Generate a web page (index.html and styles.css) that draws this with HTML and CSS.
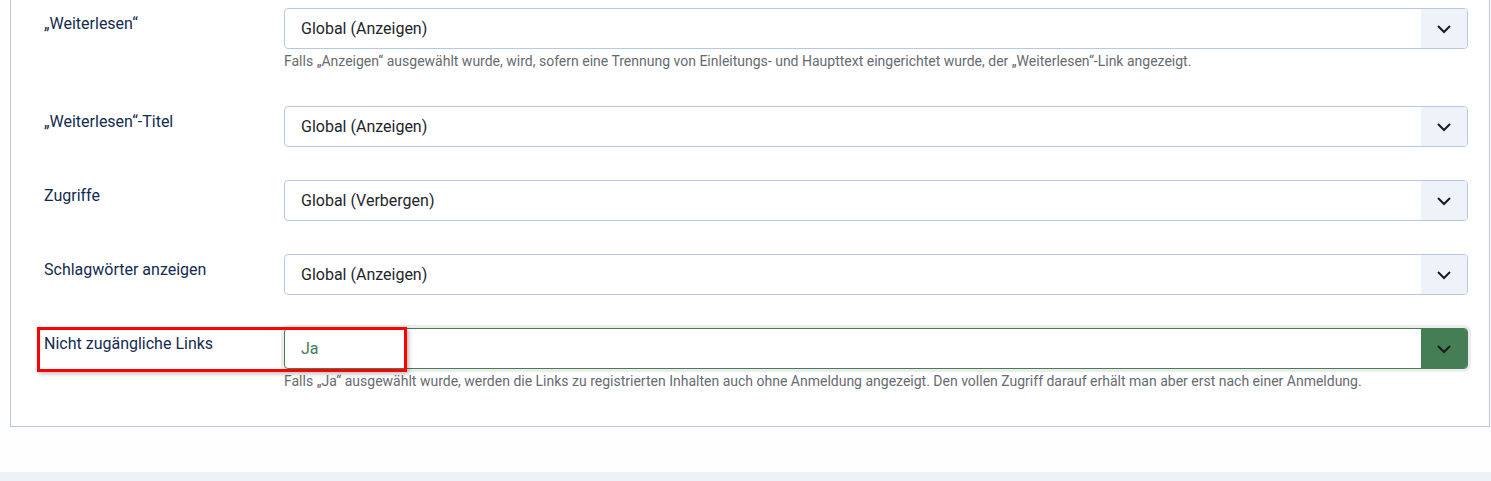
FILE: index.html
```html
<!DOCTYPE html>
<html lang="de">
<head>
<meta charset="utf-8">
<title>Optionen</title>
<link rel="stylesheet" href="styles.css">
</head>
<body>
<div class="page">
    <div class="card">

        <div class="row">
            <div class="label">„Weiterlesen“</div>
            <div class="control">
                <div class="select">
                    <span class="value">Global (Anzeigen)</span>
                    <span class="caret"><svg width="16" height="10" viewBox="0 0 16 10"><path d="M2 2 L8 8 L14 2" fill="none" stroke="#1b1b1b" stroke-width="2"/></svg></span>
                </div>
                <div class="help">Falls „Anzeigen“ ausgewählt wurde, wird, sofern eine Trennung von Einleitungs- und Haupttext eingerichtet wurde, der „Weiterlesen“-Link angezeigt.</div>
            </div>
        </div>

        <div class="row">
            <div class="label">„Weiterlesen“-Titel</div>
            <div class="control">
                <div class="select">
                    <span class="value">Global (Anzeigen)</span>
                    <span class="caret"><svg width="16" height="10" viewBox="0 0 16 10"><path d="M2 2 L8 8 L14 2" fill="none" stroke="#1b1b1b" stroke-width="2"/></svg></span>
                </div>
            </div>
        </div>

        <div class="row">
            <div class="label">Zugriffe</div>
            <div class="control">
                <div class="select">
                    <span class="value">Global (Verbergen)</span>
                    <span class="caret"><svg width="16" height="10" viewBox="0 0 16 10"><path d="M2 2 L8 8 L14 2" fill="none" stroke="#1b1b1b" stroke-width="2"/></svg></span>
                </div>
            </div>
        </div>

        <div class="row">
            <div class="label">Schlagwörter anzeigen</div>
            <div class="control">
                <div class="select">
                    <span class="value">Global (Anzeigen)</span>
                    <span class="caret"><svg width="16" height="10" viewBox="0 0 16 10"><path d="M2 2 L8 8 L14 2" fill="none" stroke="#1b1b1b" stroke-width="2"/></svg></span>
                </div>
            </div>
        </div>

        <div class="row">
            <div class="label">Nicht zugängliche Links</div>
            <div class="control">
                <div class="select select-ok">
                    <span class="value">Ja</span>
                    <span class="caret"><svg width="16" height="10" viewBox="0 0 16 10"><path d="M2 2 L8 8 L14 2" fill="none" stroke="#1b1b1b" stroke-width="2"/></svg></span>
                </div>
                <div class="help">Falls „Ja“ ausgewählt wurde, werden die Links zu registrierten Inhalten auch ohne Anmeldung angezeigt. Den vollen Zugriff darauf erhält man aber erst nach einer Anmeldung.</div>
            </div>
            <!-- annotation frame drawn over the label and field -->
            <div class="marker"></div>
        </div>

    </div>
</div>
<div class="footer-band"></div>
</body>
</html>
```

FILE: styles.css
```css
html, body {
    margin: 0;
    padding: 0;
}

body {
    background: #fefefe;
    font-family: Roboto, "Liberation Sans", sans-serif;
    overflow: hidden;
    width: 1491px;
    height: 481px;
}

.page {
    height: 472px;
    padding-left: 10px;
}

.card {
    width: 1480px;
    box-sizing: border-box;
    background: #fff;
    border: 1px solid #b7c9e2;
    border-top: none;
    padding: 8px 0 33px 33px;
}

.row {
    position: relative;
    display: grid;
    grid-template-columns: 240px 1184px;
    margin-bottom: 33px;
}

.row:last-child {
    margin-bottom: 0;
}

.label {
    color: #132b50;
    font-size: 16px;
    line-height: 24px;
    padding-top: 4px;
}

.select {
    display: flex;
    height: 41px;
    box-sizing: border-box;
    border: 1px solid #b7c9e2;
    border-radius: 4px;
    overflow: hidden;
    background: #fff;
}

.value {
    flex: 1;
    padding-left: 16px;
    line-height: 39px;
    font-size: 16px;
    color: #22262a;
}

.caret {
    width: 46px;
    display: flex;
    align-items: center;
    justify-content: center;
    background: #eef3fa;
}

.select-ok {
    border-color: #457d54;
    box-shadow: 0 0 0 3px #ebeceb;
}

.select-ok .value {
    color: #457d54;
}

.select-ok .caret {
    background: #457d54;
}

.help {
    margin: 3px 0;
    font-size: 14px;
    line-height: 18px;
    color: #666b70;
}

.marker {
    position: absolute;
    left: -7px;
    top: -1px;
    width: 364px;
    height: 39px;
    border: 3px solid #f00;
    box-shadow: 2px 2px 4px rgba(0, 0, 0, 0.25);
    pointer-events: none;
}

.footer-band {
    height: 9px;
    background: #eef2f8;
}
```
